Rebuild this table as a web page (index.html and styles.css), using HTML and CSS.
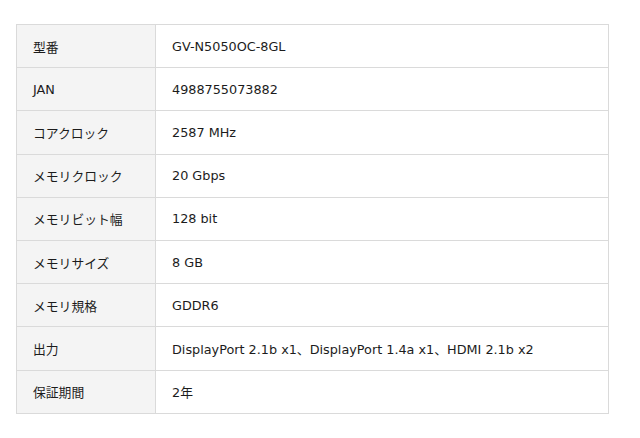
FILE: index.html
```html
<!DOCTYPE html>
<html lang="ja">
<head>
<meta charset="utf-8">
<link rel="stylesheet" href="styles.css">
</head>
<body>
<div class="wrap">
<table class="spec">
<tbody>
<tr><th>型番</th><td>GV-N5050OC-8GL</td></tr>
<tr><th>JAN</th><td>4988755073882</td></tr>
<tr><th>コアクロック</th><td>2587 MHz</td></tr>
<tr><th>メモリクロック</th><td>20 Gbps</td></tr>
<tr><th>メモリビット幅</th><td>128 bit</td></tr>
<tr><th>メモリサイズ</th><td>8 GB</td></tr>
<tr><th>メモリ規格</th><td>GDDR6</td></tr>
<tr><th>出力</th><td>DisplayPort 2.1b x1、DisplayPort 1.4a x1、HDMI 2.1b x2</td></tr>
<tr><th>保証期間</th><td>2年</td></tr>
</tbody>
</table>
</div>
</body>
</html>
```
FILE: styles.css
```css
html, body {
  margin: 0;
  padding: 0;
  background: #fff;
}
.wrap {
  padding: 24px 16px;
}
.spec {
  width: 593px;
  border-collapse: collapse;
  font-family: "DejaVu Sans", "Noto Sans CJK JP", sans-serif;
  font-size: 12.8px;
  color: #1c1c1c;
}
.spec tr {
  height: 43.2px;
}
.spec th,
.spec td {
  border: 1px solid #dadada;
  padding: 0 16px;
  text-align: left;
  font-weight: normal;
  vertical-align: middle;
}
.spec th {
  width: 106px;
  background: #f4f4f4;
}
.spec td {
  background: #fff;
}
```
